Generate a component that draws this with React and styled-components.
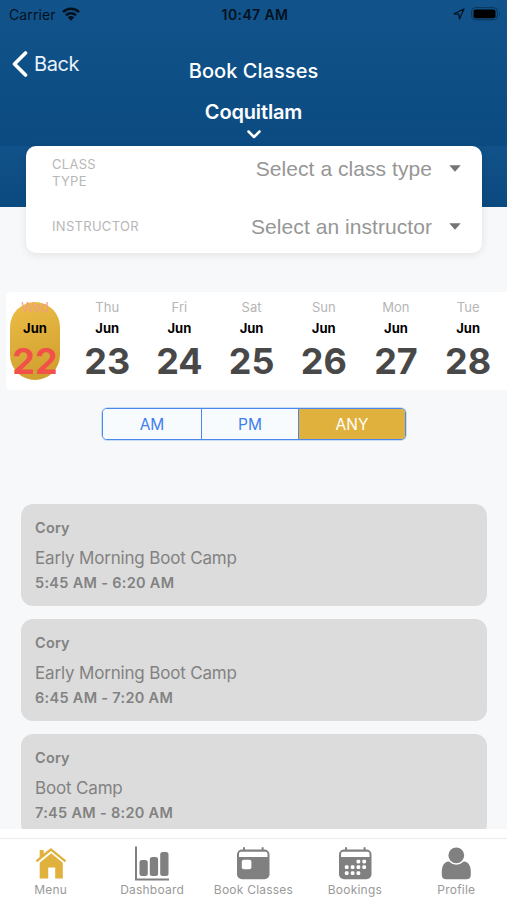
import React from "react";
import styled, { createGlobalStyle } from "styled-components";

const GlobalStyle = createGlobalStyle`
  * { box-sizing: border-box; }
  body { margin: 0; background: #f6f8fa; font-family: Inter, "Liberation Sans", sans-serif; }
`;

const Screen = styled.div`
  display: flex;
  flex-direction: column;
  width: 507px;
  height: 900px;
  overflow: hidden;
  background: #f6f8fa;
`;

const Header = styled.header`
  height: 207px;
  flex: none;
  color: #fff;
  background:
    linear-gradient(#11528a, #0b4a7f) 0 146px / 100% 61px no-repeat,
    linear-gradient(#11538a, #0b4b82 146px);
`;

const StatusBar = styled.div`
  height: 28px;
  display: grid;
  grid-template-columns: 1fr auto 1fr;
  align-items: center;
  padding: 0 6px 0 9px;
  color: #04111d;
  font-size: 14px;
`;

const Carrier = styled.div`
  display: flex;
  align-items: center;
  gap: 6px;
  letter-spacing: 0.1px;
`;

const Clock = styled.div`
  font-weight: 600;
  letter-spacing: 0.4px;
`;

const StatusIcons = styled.div`
  display: flex;
  justify-content: flex-end;
  align-items: center;
  gap: 6px;
`;

const NavRow = styled.div`
  display: grid;
  grid-template-columns: 1fr auto 1fr;
  height: 72px;
  padding-top: 22px;
`;

const BackButton = styled.button`
  display: flex;
  align-items: center;
  gap: 6px;
  height: 28px;
  padding: 0 0 0 12px;
  border: 0;
  background: none;
  color: #eaf3fc;
  font: 400 20px Inter, sans-serif;
  letter-spacing: -0.4px;
`;

const Title = styled.h1`
  margin: 8px 0 0;
  font-size: 20px;
  line-height: 26px;
  font-weight: 500;
  letter-spacing: 0.05px;
`;

const LocationPicker = styled.div`
  display: flex;
  flex-direction: column;
  align-items: center;
  gap: 6px;
  font-size: 20px;
  line-height: 24px;
  font-weight: 600;
  letter-spacing: -0.15px;
`;

const FilterCard = styled.section`
  position: relative;
  flex: none;
  width: 456px;
  height: 107px;
  margin: -61px 0 0 26px;
  padding: 9px 21px 0 26px;
  border-radius: 10px;
  background: #fff;
  box-shadow: 0 2px 9px rgba(0, 0, 0, 0.09);
`;

const FilterRow = styled.div`
  display: flex;
  align-items: flex-start;
  justify-content: space-between;
  height: 58px;
`;

const FilterLabel = styled.div`
  width: ${(p) => p.$width}px;
  margin-top: ${(p) => p.$top}px;
  color: #b7b7b7;
  font-size: 13px;
  line-height: 17px;
  letter-spacing: 0.3px;
`;

const FilterValue = styled.div`
  display: flex;
  align-items: center;
  gap: 17px;
  height: 27px;
  color: #969696;
  font: 400 21px "Liberation Sans", sans-serif;
  letter-spacing: 0.06px;
`;

const DateStrip = styled.section`
  display: flex;
  flex: none;
  gap: 22.2px;
  height: 98px;
  margin: 39px 0 0 6px;
  padding: 10px 0 0 4px;
  border-radius: 5px 0 0 5px;
  background: #fff;
`;

const Day = styled.div`
  display: flex;
  flex-direction: column;
  align-items: center;
  flex: none;
  width: 50px;
  height: 78px;
  border-radius: 25px;
  background: ${(p) => (p.$active ? "linear-gradient(160deg, #edbd47, #cd9d2d)" : "none")};
`;

const Weekday = styled.span`
  flex: none;
  height: 19px;
  margin-top: -4px;
  color: ${(p) => (p.$active ? "#f0a080" : "#b5b5b5")};
  font-size: 13px;
  line-height: 19px;
`;

const Month = styled.span`
  flex: none;
  color: #000;
  font-size: 13px;
  line-height: 22px;
  font-weight: 700;
`;

const DateNumber = styled.span`
  flex: none;
  color: ${(p) => (p.$active ? "#f15148" : "#484848")};
  font-size: 36px;
  line-height: 45px;
  font-weight: 700;
`;

const Segments = styled.div`
  display: grid;
  grid-template-columns: 98px 97px 1fr;
  flex: none;
  width: 304px;
  height: 32px;
  margin: 18px 0 0 102px;
  overflow: hidden;
  border: 1px solid #4b88ea;
  border-radius: 5px;
  box-shadow: 0 0 0 0.5px rgba(75, 136, 234, 0.5);
`;

const Segment = styled.button`
  padding: 0;
  border: 0;
  border-left: ${(p) => (p.$first ? 0 : 1)}px solid #4b88ea;
  background: ${(p) => (p.$active ? "#e0b13d" : "#f8fbfd")};
  color: ${(p) => (p.$active ? "#fff" : "#3e7fee")};
  font: 400 15.5px Inter, sans-serif;
`;

const ClassList = styled.main`
  display: flex;
  flex-direction: column;
  flex: none;
  gap: 13px;
  height: 389px;
  padding: 64px 20px 0 21px;
  overflow: hidden;
`;

const ClassCard = styled.article`
  flex: none;
  height: 102px;
  padding: 14px;
  border-radius: 12px;
  background: #dcdcdc;
  color: #828282;
`;

const Coach = styled.div`
  font-size: 14.5px;
  line-height: 20px;
  font-weight: 600;
  letter-spacing: 0.2px;
`;

const ClassName = styled.div`
  margin-top: 8px;
  font-size: 17px;
  line-height: 24px;
  letter-spacing: -0.17px;
`;

const ClassTime = styled.div`
  margin-top: 3px;
  font-size: 14.5px;
  line-height: 20px;
  font-weight: 600;
  letter-spacing: 0.3px;
`;

const TabBar = styled.nav`
  flex: 1;
  padding-top: 9px;
  background: #fff;
`;

const TabRow = styled.div`
  display: grid;
  grid-template-columns: repeat(5, 1fr);
  height: 62px;
  border-top: 1px solid #ececec;
`;

const Tab = styled.button`
  display: flex;
  flex-direction: column;
  align-items: center;
  padding: 7px 0 0;
  border: 0;
  background: none;
  color: ${(p) => (p.$active ? "#e0b13d" : "#808080")};
`;

const TabLabel = styled.span`
  white-space: nowrap;
  color: #999;
  font: 400 12px/16px Inter, sans-serif;
  letter-spacing: 0.22px;
`;

const WifiIcon = () => (
  <svg width="18" height="14" viewBox="0 0 18 14" fill="none" stroke="currentColor" strokeWidth="2.5">
    <path d="M1 5.1a11.4 11.4 0 0 1 16 0M4 8.3a7.1 7.1 0 0 1 10 0" />
    <path d="M5.8 10.4a4.5 4.5 0 0 1 6.4 0L9 13.7z" fill="currentColor" stroke="none" />
  </svg>
);

const LocationIcon = () => (
  <svg width="12" height="12" viewBox="0 0 12 12" fill="none" stroke="currentColor" strokeWidth="1.2" strokeLinejoin="round">
    <path d="M1 5.8 11 1 6.5 11 5.8 6.2z" />
  </svg>
);

const BatteryIcon = () => (
  <svg width="30" height="14" viewBox="0 0 30 14">
    <rect x=".6" y=".6" width="25.8" height="12.2" rx="3.8" fill="none" stroke="#0a355c" strokeWidth="1" />
    <rect x="2.5" y="2.4" width="22" height="8.8" rx="2" fill="#000" />
    <path d="M28 4.7q1.6 2 0 4z" fill="#0a355c" />
  </svg>
);

const BackIcon = () => (
  <svg width="16" height="26" viewBox="0 0 16 26" fill="none" stroke="#fff" strokeWidth="3.6" strokeLinecap="round" strokeLinejoin="round">
    <path d="M13.5 2 2.5 13l11 11" />
  </svg>
);

const ChevronDown = () => (
  <svg width="16" height="9" viewBox="0 0 16 9" fill="none" stroke="#fff" strokeWidth="2.5" strokeLinecap="round" strokeLinejoin="round">
    <path d="m2.5 1.5 5.5 5.5 5.5-5.5" />
  </svg>
);

const Caret = () => (
  <svg width="12" height="7" viewBox="0 0 12 7">
    <path d="M.3.3h11.4L6 6.7z" fill="#747474" />
  </svg>
);

const HomeIcon = () => (
  <svg width="34" height="36" viewBox="0 0 34 36" fill="currentColor">
    <path d="M5.7 4h4v3.5L17 2l15.3 12.5-1.5 1.7L17 5 3.2 16.2l-1.5-1.7 4-3.4z" />
    <path d="m17.2 7.3 11.6 9.4V32.500h-7.600V21.500h-7V32.500H5.700V16.700z" />
  </svg>
);

const ChartIcon = () => (
  <svg width="36" height="36" viewBox="0 0 36 36" fill="currentColor">
    <path d="M2 .5v33h33" fill="none" stroke="currentColor" strokeWidth="2" />
    <rect x="5.5" y="14" width="8.3" height="16" rx="2.5" />
    <rect x="15.8" y="11" width="8.3" height="19" rx="2.5" />
    <rect x="26.2" y="6" width="8.3" height="24" rx="2.5" />
  </svg>
);

const CalendarFrame = ({ children }) => (
  <svg width="34" height="36" viewBox="0 0 34 36" fill="currentColor">
    <path d="M8 1.3v4M26.6 1.3v4" fill="none" stroke="currentColor" strokeWidth="2" />
    <rect x="1" y="3.5" width="32.5" height="29.7" rx="5" />
    <path d="M3 11V7.700q0-2 2-2h24.500q2 0 2 2V11z" fill="#fff" />
    {children}
  </svg>
);

const BookIcon = () => (
  <CalendarFrame>
    <rect x="5.8" y="13.7" width="9.6" height="9.6" rx="2" fill="#fff" />
  </CalendarFrame>
);

const DOTS = [[20.4, 15.6], [26.2, 15.6], [8.7, 21.2], [14.6, 21.2], [20.4, 21.2], [26.2, 21.2], [8.7, 27.2], [14.6, 27.2], [20.4, 27.2]];

const BookingsIcon = () => (
  <CalendarFrame>
    {DOTS.map(([x, y]) => (
      <rect key={`${x}-${y}`} x={x - 1.9} y={y - 1.9} width="3.8" height="3.8" rx="1.4" fill="#fff" />
    ))}
  </CalendarFrame>
);

const ProfileIcon = () => (
  <svg width="32" height="36" viewBox="0 0 32 36" fill="currentColor">
    <path d="M8.5 15.5C4 16 1.8 20.5 1.8 25.5V28.7q0 4.500 4.500 4.500h20q4.500 0 4.500-4.500V25.500C30.800 20.500 28.600 16 24.100 15.500z" />
    <circle cx="16.3" cy="9.3" r="8.7" stroke="#fff" strokeWidth="1.6" />
  </svg>
);

const DAYS = [["Wed", 22], ["Thu", 23], ["Fri", 24], ["Sat", 25], ["Sun", 26], ["Mon", 27], ["Tue", 28]];

const CLASSES = [
  ["Early Morning Boot Camp", "5:45 AM - 6:20 AM"],
  ["Early Morning Boot Camp", "6:45 AM - 7:20 AM"],
  ["Boot Camp", "7:45 AM - 8:20 AM"],
];

const TABS = [
  ["Menu", HomeIcon],
  ["Dashboard", ChartIcon],
  ["Book Classes", BookIcon],
  ["Bookings", BookingsIcon],
  ["Profile", ProfileIcon],
];

export default function App() {
  return (
    <Screen>
      <GlobalStyle />
      <Header>
        <StatusBar>
          <Carrier>Carrier <WifiIcon /></Carrier>
          <Clock>10:47 AM</Clock>
          <StatusIcons><LocationIcon /><BatteryIcon /></StatusIcons>
        </StatusBar>
        <NavRow>
          <BackButton><BackIcon />Back</BackButton>
          <Title>Book Classes</Title>
        </NavRow>
        <LocationPicker>Coquitlam<ChevronDown /></LocationPicker>
      </Header>
      <FilterCard>
        <FilterRow>
          <FilterLabel $width={60} $top={1}>CLASS TYPE</FilterLabel>
          <FilterValue>Select a class type<Caret /></FilterValue>
        </FilterRow>
        <FilterRow>
          <FilterLabel $width={110} $top={5}>INSTRUCTOR</FilterLabel>
          <FilterValue>Select an instructor<Caret /></FilterValue>
        </FilterRow>
      </FilterCard>
      <DateStrip>
        {DAYS.map(([name, date], i) => (
          <Day key={date} $active={i === 0}>
            <Weekday $active={i === 0}>{name}</Weekday>
            <Month>Jun</Month>
            <DateNumber $active={i === 0}>{date}</DateNumber>
          </Day>
        ))}
      </DateStrip>
      <Segments>
        <Segment $first>AM</Segment>
        <Segment>PM</Segment>
        <Segment $active>ANY</Segment>
      </Segments>
      <ClassList>
        {CLASSES.map(([name, time]) => (
          <ClassCard key={time}>
            <Coach>Cory</Coach>
            <ClassName>{name}</ClassName>
            <ClassTime>{time}</ClassTime>
          </ClassCard>
        ))}
      </ClassList>
      <TabBar>
        <TabRow>
          {TABS.map(([label, Icon], i) => (
            <Tab key={label} $active={i === 0}>
              <Icon />
              <TabLabel>{label}</TabLabel>
            </Tab>
          ))}
        </TabRow>
      </TabBar>
    </Screen>
  );
}
